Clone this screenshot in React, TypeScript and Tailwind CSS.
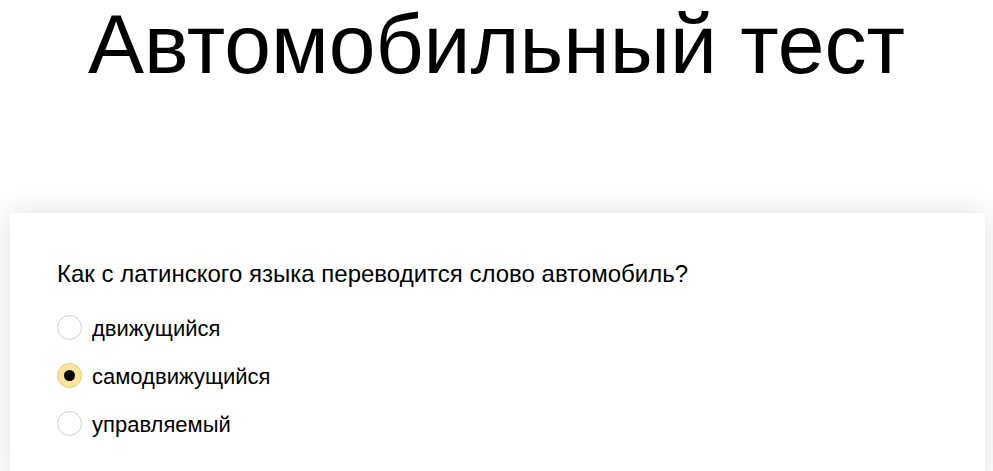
const options = ["движущийся", "самодвижущийся", "управляемый"];

function Radio({ checked }: { checked: boolean }) {
  if (checked) {
    return (
      <span className="flex h-[25px] w-[25px] shrink-0 items-center justify-center rounded-full border border-[#e3c97a] bg-[#ffe59a]">
        <span className="h-[11px] w-[11px] rounded-full bg-black" />
      </span>
    );
  }
  return <span className="h-[25px] w-[25px] shrink-0 rounded-full border border-[#d0d0d0] bg-white" />;
}

export default function App() {
  const selected = 1;
  return (
    <div className="min-h-[471px] bg-white font-['Liberation_Sans',Arial,sans-serif] text-black">
      <h1 className="text-center text-[84px] leading-[88px]">Автомобильный тест</h1>
      <div className="ml-[10px] mr-[8px] mt-[125px] bg-white px-[47px] pb-10 pt-[47px] shadow-[0_0_28px_rgba(0,0,0,0.13)]">
        <p className="text-[24px] leading-[28px]">Как с латинского языка переводится слово автомобиль?</p>
        <div className="mt-[25px] flex flex-col gap-[19px]">
          {options.map((o, i) => (
            <label key={o} className="flex items-center gap-[10px] text-[22px] leading-[26px]">
              <Radio checked={i === selected} />
              <span className="pt-[3px]">{o}</span>
            </label>
          ))}
        </div>
      </div>
    </div>
  );
}
